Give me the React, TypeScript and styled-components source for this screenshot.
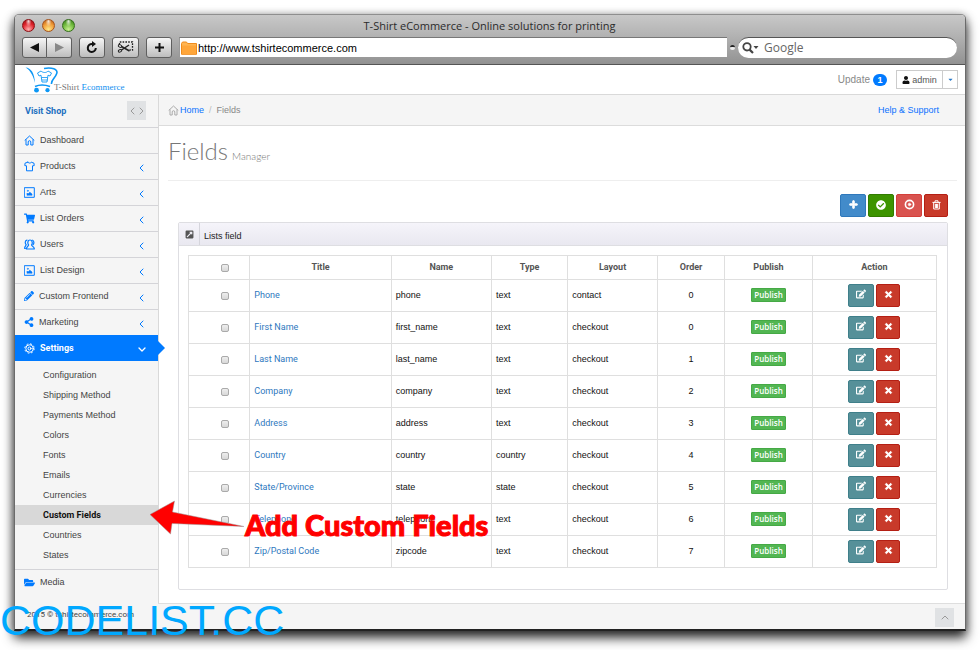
import React from "react";
import styled, { createGlobalStyle, css } from "styled-components";
import {
  FaShoppingCart, FaPencilAlt, FaShareAlt, FaFolderOpen, FaPlus, FaCheckCircle,
  FaTimes, FaEdit, FaExternalLinkSquareAlt, FaUser, FaCaretDown,
} from "react-icons/fa";

const GlobalStyle = createGlobalStyle`
  *, *::before, *::after { box-sizing: border-box; }
  body { margin: 0; background: #fff; font-family: "Liberation Sans", Arial, sans-serif; font-size: 9px; line-height: 12px; color: #222; }
  a { color: inherit; text-decoration: none; }
  button, input { font: inherit; margin: 0; }
  ul, ol, h1, h2, p { margin: 0; padding: 0; list-style: none; font-weight: 400; }
  svg { display: block; flex: none; }
`;

const Page = styled.div`
  position: relative;
  padding: 14px 14px 20px 14px;
  overflow: hidden;
`;

const Window = styled.div`
  border: 1px solid #6b6b6b;
  border-top-color: #8e8e8e;
  border-bottom: 2px solid #222;
  border-radius: 5px 5px 0 0;
  background: #f5f5f5;
  box-shadow: 0 7px 12px rgba(0, 0, 0, 0.8), 0 1px 8px rgba(0, 0, 0, 0.35);
`;

const Chrome = styled.div`
  height: 50px;
  padding: 3px 8px 0 7px;
  background: linear-gradient(#c8c8c8 0, #b2b2b2 21px, #929292 100%);
  border-bottom: 1px solid #555;
  border-radius: 4px 4px 0 0;
`;

const TitleBar = styled.div`
  display: grid;
  grid-template-columns: 60px 1fr 60px;
  align-items: center;
  height: 15px;
`;

const Lights = styled.div`
  display: flex;
  gap: 7px;
`;

const Light = styled.span<{ $dark: string; $mid: string; $glow: string }>`
  width: 13px;
  height: 13px;
  border-radius: 50%;
  border: 1px solid ${(p) => p.$dark};
  background:
    radial-gradient(ellipse at 50% 12%, rgba(255, 255, 255, 0.8) 0, rgba(255, 255, 255, 0) 38%),
    radial-gradient(circle at 50% 85%, ${(p) => p.$glow} 0, ${(p) => p.$mid} 55%, ${(p) => p.$dark} 100%);
`;

const WindowTitle = styled.div`
  text-align: center;
  font-family: "Open Sans", "Noto Sans", sans-serif;
  font-size: 11px;
  color: #2b2b2b;
`;

const ToolRow = styled.div`
  display: flex;
  align-items: center;
  height: 22px;
  margin-top: 3px;
`;

const ToolGroup = styled.div`
  display: flex;
  margin-right: 7px;
`;

const ToolButton = styled.button<{ $w?: number }>`
  display: flex;
  align-items: center;
  justify-content: center;
  width: ${(p) => p.$w ?? 26}px;
  height: 21px;
  padding: 0;
  border: 1px solid #5f5f5f;
  border-radius: 3px;
  background: linear-gradient(#f6f6f6, #bdbdbd);
  color: #111;
  & + & { border-left: 0; border-radius: 0 3px 3px 0; }
  &:first-child:not(:last-child) { border-radius: 3px 0 0 3px; }
`;

const Address = styled.label`
  display: flex;
  flex: 1;
  align-items: center;
  height: 20px;
  padding-left: 1px;
  gap: 1px;
  background: #fff;
  border-top: 1px solid #777;
  border-left: 1px solid #999;
`;

const AddressInput = styled.input`
  flex: 1;
  min-width: 0;
  padding: 0;
  border: 0;
  outline: 0;
  background: none;
  font-size: 11px;
  color: #000;
`;

const Knob = styled.span`
  width: 5px;
  height: 5px;
  margin: 0 3px;
  border-radius: 50%;
  border-top: 2px solid #222;
  background: #eee;
`;

const Search = styled.label`
  display: flex;
  align-items: center;
  width: 219px;
  height: 21px;
  padding-left: 4px;
  gap: 5px;
  border-radius: 11px;
  background: #fff;
  border-top: 1px solid #555;
`;

const SearchInput = styled(AddressInput)`
  font-family: "Open Sans", "Noto Sans", sans-serif;
  font-size: 12px;
  &::placeholder { color: #666; opacity: 1; }
`;

const TopBar = styled.header`
  display: flex;
  align-items: center;
  justify-content: space-between;
  height: 30px;
  padding: 0 7px 0 10px;
  background: #fff;
  border-bottom: 1px solid #d9d9d9;
`;

const Brand = styled.a`
  display: flex;
  align-items: flex-end;
  height: 27px;
  font-family: "Liberation Serif", serif;
  font-size: 9px;
  color: #777;
  white-space: nowrap;
  & em { font-style: normal; color: #1090f0; }
  & svg { margin-right: -5px; }
`;

const Account = styled.div`
  display: flex;
  align-items: center;
`;

const Update = styled.a`
  display: flex;
  align-items: center;
  gap: 3px;
  margin-right: 9px;
  font-size: 10px;
  color: #888;
`;

const Count = styled.span`
  width: 14px;
  height: 12px;
  border-radius: 6px;
  background: #007aff;
  color: #fff;
  font-size: 9px;
  font-weight: 700;
  line-height: 12px;
  text-align: center;
`;

const AdminButton = styled.button<{ $w: number }>`
  display: flex;
  align-items: center;
  justify-content: center;
  gap: 2px;
  width: ${(p) => p.$w}px;
  height: 19px;
  padding: 0;
  border: 1px solid #ccc;
  background: #fff;
  color: #555;
  & + & { border-left: 0; color: #2878c8; }
`;

const Body = styled.div`
  display: flex;
`;

const Sidebar = styled.aside`
  flex: 0 0 144px;
  border-right: 1px solid #d9d9d9;
`;

const ShopRow = styled.div`
  display: flex;
  align-items: center;
  justify-content: space-between;
  height: 32px;
  padding: 0 12px 1px 10px;
  color: #2270c0;
  font-family: Roboto, sans-serif;
  font-weight: 700;
`;

const Toggler = styled.button`
  display: flex;
  align-items: center;
  justify-content: center;
  gap: 4px;
  width: 19px;
  height: 19px;
  padding: 0;
  border: 0;
  background: #e0e2e4;
  color: #999;
`;

const NavItem = styled.a<{ $active?: boolean }>`
  position: relative;
  display: flex;
  align-items: center;
  gap: 5px;
  height: 26px;
  padding: 0 14px 1px 9px;
  border-top: 1px solid #d4d4d8;
  font-size: 9px;
  color: #444;
  & > svg { color: #007aff; }
  & > span { flex: 1; }
  & > svg:last-child { margin-top: 3px; }
  ${(p) => p.$active && css`
    background: #007aff;
    border-top-color: #007aff;
    padding-right: 12px;
    color: #fff;
    font-family: Roboto, sans-serif;
    font-weight: 700;
    & > svg { color: #fff; }
    &::after {
      content: "";
      position: absolute;
      left: 100%;
      top: 5px;
      width: 7px;
      height: 14px;
      background: #007aff;
      clip-path: polygon(0 0, 100% 50%, 0 100%);
    }
  `}
`;

const SubMenu = styled.ul`
  padding: 4px 0;
`;

const SubLink = styled.a<{ $active?: boolean }>`
  display: block;
  padding: 4px 0 4px 28px;
  color: #444;
  ${(p) => p.$active && css`
    background: #d8d8d8;
    color: #111;
    font-family: Roboto, sans-serif;
    font-weight: 700;
  `}
`;

const Main = styled.main`
  flex: 1;
  min-width: 0;
  background: #fff;
`;

const Crumbs = styled.nav`
  display: flex;
  align-items: center;
  height: 31px;
  padding: 0 26px 0 9px;
  gap: 5px;
  background: #f5f5f5;
  border-bottom: 1px solid #dcdcdc;
  color: #888;
  & > a { display: flex; align-items: center; gap: 1px; color: #0a72ff; }
  & > a:last-child { margin-left: auto; }
  & > i { font-style: normal; color: #bbb; }
  & svg { color: #aaa; }
`;

const Heading = styled.div`
  display: flex;
  align-items: baseline;
  gap: 4px;
  height: 55px;
  margin: 0 8px 0 9px;
  padding-top: 11px;
  border-bottom: 1px solid #eee;
  font-family: Lato, "Open Sans", sans-serif;
  font-weight: 300;
  line-height: 28px;
  color: #777;
  & h1 { font-size: 24px; font-weight: 300; }
  & small { font-size: 10px; }
`;

const Actions = styled.div`
  display: flex;
  justify-content: flex-end;
  gap: 2px;
  margin: 13px 17px 5px 0;
`;

type Tone = "blue" | "green" | "pink" | "red" | "teal";
const tones: Record<Tone, [string, string]> = {
  blue: ["#428bca", "#2f78bb"],
  green: ["#3d9400", "#327c00"],
  pink: ["#d9534f", "#d43f3a"],
  red: ["#c83a2a", "#b41f14"],
  teal: ["#569099", "#3f7f8a"],
};

const IconButton = styled.button<{ $tone: Tone; $w?: number }>`
  display: flex;
  align-items: center;
  justify-content: center;
  width: ${(p) => p.$w ?? 26}px;
  height: 23px;
  padding: 0 0 2px;
  border: 1px solid ${(p) => tones[p.$tone][1]};
  border-radius: 2px;
  background: ${(p) => tones[p.$tone][0]};
  color: #fff;
`;

const Panel = styled.section`
  margin: 0 17px 13px 19px;
  border: 1px solid #dedee2;
  border-radius: 2px;
`;

const PanelHead = styled.div`
  display: flex;
  align-items: stretch;
  height: 23px;
  background: linear-gradient(#f5f4fa, #e9e8f0);
  border-bottom: 1px solid #dedee2;
  & > span { display: flex; align-items: center; justify-content: center; width: 21px; border-right: 1px solid #d5d5dc; color: #555; }
  & > h2 { padding: 7px 0 0 4px; font-size: 9px; color: #222; }
`;

const PanelBody = styled.div`
  padding: 9px 10px 21px 9px;
`;

const Table = styled.table`
  width: 100%;
  table-layout: fixed;
  border-collapse: collapse;
  color: #111;
  & th, & td { border: 1px solid #dfdfdf; padding: 0 4px 1px; height: 32px; text-align: left; }
  & th { height: 24px; color: #555; text-align: center; font-family: Roboto, sans-serif; font-weight: 700; }
  & td a { color: #2e78be; font-family: Roboto, sans-serif; }
  & td.c { text-align: center; }
`;

const Col = styled.col<{ $w: number }>`
  width: ${(p) => p.$w}%;
`;

const Tick = styled.input`
  appearance: none;
  display: inline-block;
  width: 8px;
  height: 8px;
  margin-left: 12px;
  vertical-align: middle;
  border: 1px solid #aaa;
  border-radius: 2px;
  background: linear-gradient(#eee, #d8d8d8);
  &:checked { background: #428bca; }
`;

const Badge = styled.button`
  display: block;
  margin: 0 auto;
  height: 14px;
  padding: 0 2px;
  border: 1px solid #45a945;
  border-radius: 1px;
  background: #52b652;
  color: #fff;
  font-family: "Open Sans", sans-serif;
  font-size: 8px;
  font-weight: 600;
  line-height: 12px;
`;

const RowActions = styled.div`
  display: flex;
  justify-content: center;
  gap: 2px;
`;

const Footer = styled.footer`
  display: flex;
  height: 26px;
`;

const Copyright = styled.p`
  flex: 0 0 143px;
  padding: 6px 0 0 12px;
  font-family: Roboto, sans-serif;
  font-size: 8px;
  color: #444;
`;

const FooterBar = styled.div`
  display: flex;
  flex: 1;
  justify-content: flex-end;
  padding: 4px 11px 0 0;
  border-top: 1px solid #dedede;
`;

const Callout = styled.p`
  position: absolute;
  left: 245px;
  top: 507px;
  font-family: Lato, sans-serif;
  font-size: 29px;
  font-weight: 900;
  line-height: 35px;
  color: #f00;
  -webkit-text-stroke: 1px #f00;
  white-space: nowrap;
  pointer-events: none;
`;

const Arrow = styled.svg`
  position: absolute;
  left: 149px;
  top: 499px;
  pointer-events: none;
`;

const Watermark = styled.p`
  position: absolute;
  left: 0;
  top: 596px;
  font-size: 43px;
  line-height: 48px;
  color: #00a8ff;
  white-space: nowrap;
  pointer-events: none;
`;

type DrawProps = { children: React.ReactNode; w?: number; h?: number; box?: string; sw?: number };
const Draw = ({ children, w = 11, h = 11, box = "0 0 11 11", sw = 1 }: DrawProps) => (
  <svg width={w} height={h} viewBox={box} fill="none" stroke="currentColor" strokeWidth={sw} strokeLinejoin="round" strokeLinecap="round" aria-hidden="true">
    {children}
  </svg>
);

const HomeIcon = () => (
  <Draw><path d="M1 5.2 5.5 1 10 5.2M2 4.8V10h2.2V7a1.3 1.3 0 0 1 2.6 0v3H9V4.8" /></Draw>
);
const ShirtIcon = () => (
  <Draw><path d="M3.8 1.2 1 2.2.8 4.6l1.7.2V9.8h6V4.8l1.7-.2L10 2.2 7.2 1.2C6.6 2.4 4.4 2.4 3.8 1.2Z" /></Draw>
);
const PictureIcon = () => (
  <Draw><rect x="0.7" y="0.7" width="9.6" height="9.6" /><path d="M3 8V6l1 1 1.8-1.8L8 7v1Z" fill="currentColor" strokeWidth="0.6" /><circle cx="3.8" cy="3.8" r="0.6" fill="currentColor" strokeWidth="0.4" /></Draw>
);
const UsersIcon = () => (
  <Draw sw={1.2}>
    <path d="M4.6 6C3.300 4.500 3.600 1 6 1s2.800 3.500 1.500 5C7.600 7.300 10.200 7.400 10.400 10H2.400C2.600 7.400 4.600 7.300 4.600 6Z" />
    <path d="M3 1.200C.8 1.500.9 4.400 2.200 5.600 2.200 6.800.7 7 .6 9.300h.8M8.600 1.200c1.600.6 1.600 3.200.5 4.500" />
  </Draw>
);
const GearIcon = () => (
  <Draw>
    <circle cx="5.5" cy="5.5" r="3.7" /><circle cx="5.5" cy="5.5" r="1.5" />
    <circle cx="5.5" cy="5.5" r="4.7" strokeDasharray="1.8 1.9" strokeLinecap="butt" />
  </Draw>
);
const TargetIcon = () => (
  <Draw sw={1.6}><circle cx="5.5" cy="5.5" r="4.100" /><circle cx="5.5" cy="5.5" r="1" fill="currentColor" stroke="none" /><circle cx="5.5" cy="5.5" r="1.200" strokeWidth="1" /></Draw>
);
const ChevronLeft = () => (
  <Draw w={5} h={8} box="0 0 5 8"><path d="M4 1 1 4l3 3" /></Draw>
);
const ChevronRight = () => (
  <Draw w={5} h={8} box="0 0 5 8"><path d="m1 1 3 3-3 3" /></Draw>
);
const ChevronDown = () => (
  <Draw w={8} h={5} box="0 0 8 5" sw={1.3}><path d="m1 1 3 3 3-3" /></Draw>
);
const ChevronUp = () => (
  <Draw w={8} h={5} box="0 0 8 5"><path d="m1 4 3-3 3 3" /></Draw>
);
const ScissorsIcon = () => (
  <svg width="18" height="14" viewBox="0 0 18 14" fill="none" stroke="#222" aria-hidden="true">
    <path d="M2.500 4.500V2h13v8h-3" strokeDasharray="1.600 1.200" strokeWidth="1.300" />
    <path d="M4.500 10 12 5M4.500 6.500l8 4.500" strokeWidth="1.500" />
    <ellipse cx="3" cy="6" rx="1.800" ry="1.200" transform="rotate(25 3 6)" /><ellipse cx="3" cy="10.800" rx="1.800" ry="1.200" transform="rotate(-25 3 10.800)" />
  </svg>
);
const ReloadIcon = () => (
  <svg width="12" height="13" viewBox="0 0 12 13" fill="none" stroke="#111" strokeWidth="2" aria-hidden="true">
    <path d="M9.8 7A4 4 0 1 1 6.4 3" /><path d="M6 0v6l4-3Z" fill="#111" stroke="none" />
  </svg>
);
const Folder = () => (
  <svg width="16" height="14" viewBox="0 0 16 14" aria-hidden="true">
    <path d="M.5 2.5 1.5 1h4l1 1.5h9v10.8H.5Z" fill="#ffb552" stroke="#f08c1c" />
    <path d="M1 4.5h14V13H1Z" fill="#ffa63a" />
  </svg>
);
const Magnifier = () => (
  <svg width="17" height="12" viewBox="0 0 17 12" fill="none" stroke="#444" aria-hidden="true">
    <circle cx="5" cy="4.8" r="3.7" strokeWidth="1.8" /><path d="m7.6 7.6 3.4 3.4" strokeWidth="2.2" />
    <path d="M11.5 4h5L14 7Z" fill="#444" stroke="none" />
  </svg>
);
const TrashIcon = () => (
  <Draw w={9} h={10} box="0 0 9 10"><path d="M.8 2.4h7.4M3 2.2V.8h3v1.4M1.7 2.6V9h5.6V2.6M3.4 4.2v3.4M4.5 4.2v3.4M5.6 4.2v3.4" /></Draw>
);
const CartLogo = () => (
  <svg width="34" height="26" viewBox="0 0 34 26" fill="none" stroke="#0c97f5" aria-hidden="true">
    <path d="M.5.5C6 .8 9.500 6 10 16 8.500 10 6 3.500.5.500Z" fill="#0c97f5" stroke="none" />
    <path d="M19 1.500c7-1.500 15 .5 12.500 5.500-1.500 4.500-5.500 6-5 10" strokeWidth="1.600" />
    <path d="m16 4-3.500 2 1.500 3 2-.8L17 15h5l1-6.800 2 .8 1.500-3L23 4c-1.500 2-5 2-7 0Z" strokeWidth="0.900" />
    <path d="M16.500 10.500h6M17 13h5.500" strokeWidth="0.800" />
    <path d="M10 19.500c4-1.800 10-1.800 15 0" strokeWidth="1.700" />
    <circle cx="11.500" cy="23.200" r="2.400" fill="#0c97f5" stroke="none" /><circle cx="22.500" cy="23.200" r="2.100" fill="#0c97f5" stroke="none" />
  </svg>
);

const nav: { label: string; icon: React.ReactNode; plain?: boolean }[] = [
  { label: "Dashboard", icon: <HomeIcon />, plain: true },
  { label: "Products", icon: <ShirtIcon /> },
  { label: "Arts", icon: <PictureIcon /> },
  { label: "List Orders", icon: <FaShoppingCart size={11} /> },
  { label: "Users", icon: <UsersIcon /> },
  { label: "List Design", icon: <PictureIcon /> },
  { label: "Custom Frontend", icon: <FaPencilAlt size={10} /> },
  { label: "Marketing", icon: <FaShareAlt size={10} /> },
];

const settings = [
  "Configuration", "Shipping Method", "Payments Method", "Colors", "Fonts",
  "Emails", "Currencies", "Custom Fields", "Countries", "States",
];

const columns: [string, number][] = [
  ["", 8.2], ["Title", 18.9], ["Name", 13.4], ["Type", 10.2],
  ["Layout", 12], ["Order", 9], ["Publish", 11.7], ["Action", 16.6],
];

const fields = [
  ["Phone", "phone", "text", "contact", "0"],
  ["First Name", "first_name", "text", "checkout", "0"],
  ["Last Name", "last_name", "text", "checkout", "1"],
  ["Company", "company", "text", "checkout", "2"],
  ["Address", "address", "text", "checkout", "3"],
  ["Country", "country", "country", "checkout", "4"],
  ["State/Province", "state", "state", "checkout", "5"],
  ["Telephone", "telephone", "text", "checkout", "6"],
  ["Zip/Postal Code", "zipcode", "text", "checkout", "7"],
];

export default function App() {
  return (
    <Page>
      <GlobalStyle />
      <Window>
        <Chrome>
          <TitleBar>
            <Lights>
              <Light $dark="#8c0f14" $mid="#e0222b" $glow="#ffb0b0" />
              <Light $dark="#a8541a" $mid="#f09a35" $glow="#ffe98a" />
              <Light $dark="#34701a" $mid="#6db83a" $glow="#c8f090" />
            </Lights>
            <WindowTitle>T-Shirt eCommerce - Online solutions for printing</WindowTitle>
          </TitleBar>
          <ToolRow>
            <ToolGroup>
              <ToolButton $w={25} aria-label="Back"><svg width="9" height="9" viewBox="0 0 9 9"><path d="M9 0v9L0 4.500Z" fill="#111" /></svg></ToolButton>
              <ToolButton $w={25} aria-label="Forward"><svg width="9" height="9" viewBox="0 0 9 9"><path d="M0 0v9l9-4.500Z" fill="#888" /></svg></ToolButton>
            </ToolGroup>
            <ToolGroup><ToolButton aria-label="Reload"><ReloadIcon /></ToolButton></ToolGroup>
            <ToolGroup><ToolButton $w={27} aria-label="Clip"><ScissorsIcon /></ToolButton></ToolGroup>
            <ToolGroup><ToolButton aria-label="New tab"><svg width="11" height="11" viewBox="0 0 11 11"><path d="M5.500 1v9M1 5.500h9" stroke="#111" strokeWidth="2" /></svg></ToolButton></ToolGroup>
            <Address>
              <Folder />
              <AddressInput aria-label="Address" defaultValue="http://www.tshirtecommerce.com" />
            </Address>
            <Knob />
            <Search>
              <Magnifier />
              <SearchInput aria-label="Search" placeholder="Google" />
            </Search>
          </ToolRow>
        </Chrome>

        <TopBar>
          <Brand href="#"><CartLogo /><span>T-Shirt <em>Ecommerce</em></span></Brand>
          <Account>
            <Update href="#">Update <Count>1</Count></Update>
            <AdminButton $w={47}><FaUser size={8} color="#111" />admin</AdminButton>
            <AdminButton $w={15} aria-label="Account menu"><FaCaretDown size={7} /></AdminButton>
          </Account>
        </TopBar>

        <Body>
          <Sidebar>
            <ShopRow>
              <a href="#">Visit Shop</a>
              <Toggler aria-label="Collapse sidebar"><ChevronLeft /><ChevronRight /></Toggler>
            </ShopRow>
            <nav>
              {nav.map((n) => (
                <NavItem href="#" key={n.label}>
                  {n.icon}<span>{n.label}</span>{!n.plain && <ChevronLeft />}
                </NavItem>
              ))}
              <NavItem href="#" $active><GearIcon /><span>Settings</span><ChevronDown /></NavItem>
              <SubMenu>
                {settings.map((s) => (
                  <li key={s}><SubLink href="#" $active={s === "Custom Fields"}>{s}</SubLink></li>
                ))}
              </SubMenu>
              <NavItem href="#"><FaFolderOpen size={11} /><span>Media</span></NavItem>
            </nav>
          </Sidebar>

          <Main>
            <Crumbs>
              <a href="#"><HomeIcon />Home</a><i>/</i><span>Fields</span>
              <a href="#">Help &amp; Support</a>
            </Crumbs>
            <Heading><h1>Fields</h1><small>Manager</small></Heading>
            <Actions>
              <IconButton $tone="blue" aria-label="Add"><FaPlus size={9} stroke="currentColor" strokeWidth={50} /></IconButton>
              <IconButton $tone="green" aria-label="Publish"><FaCheckCircle size={10} /></IconButton>
              <IconButton $tone="pink" aria-label="Unpublish"><TargetIcon /></IconButton>
              <IconButton $tone="red" $w={24} aria-label="Delete"><TrashIcon /></IconButton>
            </Actions>
            <Panel>
              <PanelHead>
                <span><FaExternalLinkSquareAlt size={9} /></span>
                <h2>Lists field</h2>
              </PanelHead>
              <PanelBody>
                <Table>
                  <colgroup>{columns.map(([n, w]) => <Col key={n} $w={w} />)}</colgroup>
                  <thead>
                    <tr>
                      {columns.map(([n]) => <th key={n}>{n || <Tick type="checkbox" aria-label="Select all" />}</th>)}
                    </tr>
                  </thead>
                  <tbody>
                    {fields.map(([title, name, type, layout, order]) => (
                      <tr key={name}>
                        <td className="c"><Tick type="checkbox" aria-label={`Select ${title}`} /></td>
                        <td><a href="#">{title}</a></td>
                        <td>{name}</td>
                        <td>{type}</td>
                        <td>{layout}</td>
                        <td className="c">{order}</td>
                        <td><Badge>Publish</Badge></td>
                        <td>
                          <RowActions>
                            <IconButton $tone="teal" aria-label={`Edit ${title}`}><FaEdit size={10} /></IconButton>
                            <IconButton $tone="red" $w={24} aria-label={`Delete ${title}`}><FaTimes size={9} stroke="currentColor" strokeWidth={50} /></IconButton>
                          </RowActions>
                        </td>
                      </tr>
                    ))}
                  </tbody>
                </Table>
              </PanelBody>
            </Panel>
          </Main>
        </Body>

        <Footer>
          <Copyright>2015 © tshirtecommerce.com</Copyright>
          <FooterBar><Toggler aria-label="Back to top"><ChevronUp /></Toggler></FooterBar>
        </Footer>
      </Window>

      <Arrow width="96" height="36" viewBox="0 0 96 36" aria-hidden="true">
        <path d="M1 15.500 25.500 2l-2 11L95 27.500 23 24.500 21.500 35Z" fill="#f00" stroke="#999" strokeWidth="0.500" />
      </Arrow>
      <Callout>Add Custom Fields</Callout>
      <Watermark>CODELIST.CC</Watermark>
    </Page>
  );
}
